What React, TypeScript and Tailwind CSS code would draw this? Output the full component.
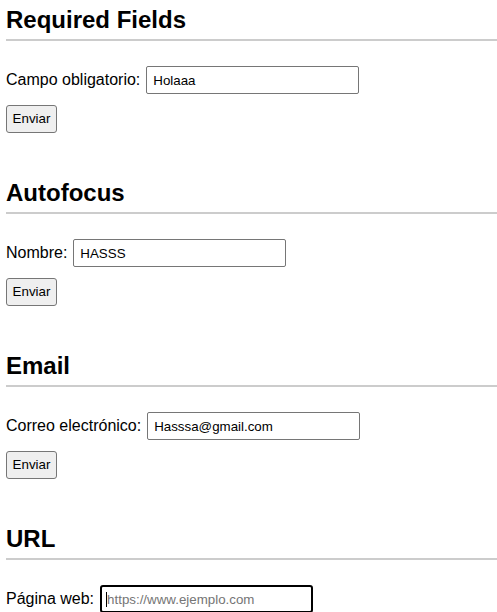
import { ReactNode } from "react";

// --- Section block -----------------------------------------------------
interface SectionProps {
  title: string;
  label: string;
  children: ReactNode;
  button?: boolean;
}

function Section({ title, label, children, button = true }: SectionProps) {
  return (
    <section className="mb-[46px]">
      <h2 className="text-[24px] leading-[28px] font-bold text-black pb-[5px] border-b-2 border-[#cccccc]">
        {title}
      </h2>
      <div className="mt-[25px] flex items-center gap-[6px] text-[16px] text-black">
        <label>{label}</label>
        {children}
      </div>
      {button && (
        <button className="mt-[11px] h-[28px] w-[51px] bg-[#efefef] border border-[#767676] rounded-[3px] text-[13.33px] text-black">
          Enviar
        </button>
      )}
    </section>
  );
}

const inputCls =
  "h-[28px] w-[213px] border border-[#767676] rounded-[2px] pl-[6px] text-[13.33px] text-black bg-white outline-none";

// --- Page ---------------------------------------------------------------
export default function App() {
  return (
    <main
      className="min-h-screen w-full bg-white pl-[6px] pt-[6px] overflow-hidden"
      style={{ fontFamily: '"Liberation Sans", Arial, sans-serif' }}
    >
      <Section title="Required Fields" label="Campo obligatorio:">
        <input className={inputCls} defaultValue="Holaaa" />
      </Section>

      <Section title="Autofocus" label="Nombre:">
        <input className={inputCls} defaultValue="HASSS" />
      </Section>

      <Section title="Email" label="Correo electrónico:">
        <input className={inputCls} defaultValue="Hasssa@gmail.com" />
      </Section>

      <Section title="URL" label="Página web:">
        <div className="relative">
          <input
            className="h-[28px] w-[213px] border-2 border-black rounded-[3px] pl-[5px] text-[13.33px] text-black bg-white outline-none placeholder:text-[#757575]"
            placeholder="https://www.ejemplo.com"
          />
          <span className="absolute left-[6px] top-[7px] h-[15px] w-px bg-black" />
        </div>
      </Section>
    </main>
  );
}
